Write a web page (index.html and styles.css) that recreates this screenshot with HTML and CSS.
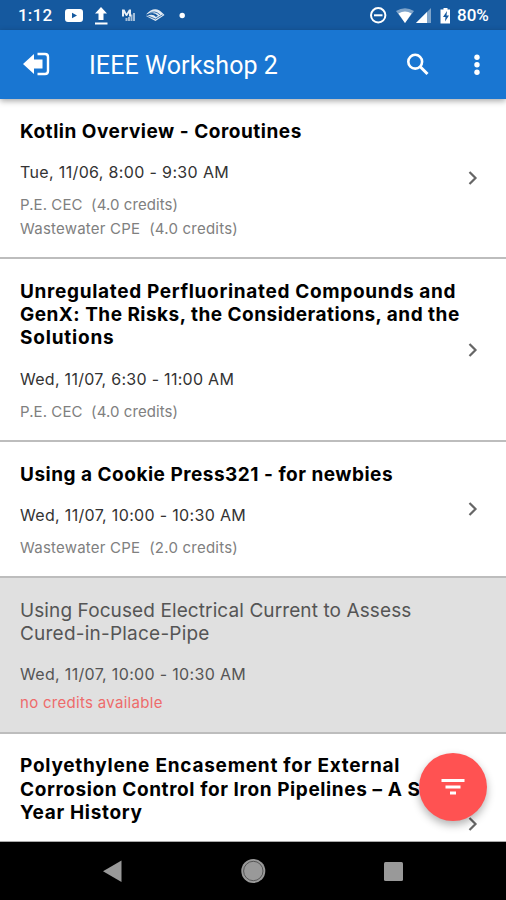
FILE: index.html
```html
<!DOCTYPE html>
<html lang="en">
<head>
<meta charset="utf-8">
<title>IEEE Workshop 2</title>
<link rel="stylesheet" href="styles.css">
</head>
<body>
<div class="screen">
  <div class="status">
    <span class="clock">1:12</span>
    <svg class="status-left" width="125" height="30" viewBox="0 0 125 30" fill="#fff">
      <path fill-rule="evenodd" d="M6 9h12q3 0 3 3v7q0 3-3 3H6q-3 0-3-3v-7q0-3 3-3zM10 12.800v5.400l5-2.700z"/>
      <path d="M39 7l-6 6.500h3.500V20h5v-6.500H45zM33 22.500h12.500v2H33z"/>
      <path d="M60 9.500h2.500l2 4 2.500-4h2v7h-2v-3.500l-2 3h-1l-2-3v3.500h-2z" opacity=".9"/><path d="M63.500 18h2v3h-2zM66 17h2v4h-2zM68.500 14.500h2V21h-2zM71 13h2v8h-2z" opacity=".6"/>
      <path d="M84 14.500q9-10 17-1l1.500 1.500-9 6-9.500-5q7-3 10 1l2-1.200q-4-5-12-1.300z" opacity=".88"/>
      <path d="M86.500 14q6-4.500 11.500.8M85 15.500l8.500 3.500 7-4.200" fill="none" stroke="#15599f" stroke-width=".8"/>
      <circle cx="120.200" cy="15.500" r="2.700"/>
    </svg>
    <svg class="status-right" width="84" height="30" viewBox="0 0 84 30" fill="#fff">
      <circle cx="8.200" cy="15.300" r="7.200" fill="none" stroke="#fff" stroke-width="2"/><path d="M4 14.300h8.500v2H4z"/>
      <path d="M26 11q9-5.500 18 0l-9 12z" opacity=".45"/><path d="M28.500 13.500q6.500-4 13 0L35 23z"/>
      <path d="M61 8v15H46z" opacity=".45"/><path d="M57 12v11H46z"/>
      <path fill-rule="evenodd" d="M73.500 8h4v1.500H80v14H70.500v-14h3zM77 11l-4 6h2.500l-.5 4.500 4-6h-2.500z"/>
    </svg>
    <span class="battery">80%</span>
  </div>
  <header class="bar">
    <svg class="exit" width="30" height="26" viewBox="0 0 30 26">
      <path d="M1 12L12 2v5.500h8.500v9H12V22z" fill="#fff"/>
      <path d="M15.500 2H23q3 0 3 3v14q0 3-3 3h-7.500" fill="none" stroke="#fff" stroke-width="2.400"/>
    </svg>
    <h1>IEEE Workshop 2</h1>
    <svg class="search" width="24" height="24" viewBox="0 0 24 24" fill="none" stroke="#fff"><circle cx="9.200" cy="8.700" r="6.900" stroke-width="2.600"/><path d="M14 13.500l7.500 7.500" stroke-width="3"/></svg>
    <svg class="more" width="8" height="24" viewBox="0 0 8 24" fill="#fff"><circle cx="4" cy="4.200" r="2.700"/><circle cx="4" cy="11.700" r="2.700"/><circle cx="4" cy="19.200" r="2.700"/></svg>
  </header>
  <main class="list">
    <article class="row">
      <div class="text">
        <h2><span class="t1">Kotlin Overview - Coroutines</span></h2>
        <p class="time"><span class="d1">Tue, 11/06, 8:00 - 9:30 AM</span></p>
        <p class="credit"><span class="pe">P.E. CEC&nbsp; (4.0 credits)</span></p>
        <p class="credit"><span class="ww">Wastewater CPE&nbsp; (4.0 credits)</span></p>
      </div>
      <svg class="chevron" width="10" height="14" viewBox="0 0 10 14"><path d="M1.500 1l6 6-6 6"/></svg>
    </article>
    <article class="row">
      <div class="text">
        <h2><span class="t2">Unregulated Perfluorinated Compounds and</span><br><span class="t3">GenX: The Risks, the Considerations, and the</span><br><span class="t4">Solutions</span></h2>
        <p class="time"><span class="d2">Wed, 11/07, 6:30 - 11:00 AM</span></p>
        <p class="credit"><span class="pe">P.E. CEC&nbsp; (4.0 credits)</span></p>
      </div>
      <svg class="chevron" width="10" height="14" viewBox="0 0 10 14"><path d="M1.500 1l6 6-6 6"/></svg>
    </article>
    <article class="row">
      <div class="text">
        <h2><span class="t5">Using a Cookie Press321 - for newbies</span></h2>
        <p class="time"><span class="d3">Wed, 11/07, 10:00 - 10:30 AM</span></p>
        <p class="credit"><span class="ww">Wastewater CPE&nbsp; (2.0 credits)</span></p>
      </div>
      <svg class="chevron" width="10" height="14" viewBox="0 0 10 14"><path d="M1.500 1l6 6-6 6"/></svg>
    </article>
    <article class="row disabled">
      <div class="text">
        <h2><span class="t6">Using Focused Electrical Current to Assess</span><br><span class="t7">Cured-in-Place-Pipe</span></h2>
        <p class="time"><span class="d3">Wed, 11/07, 10:00 - 10:30 AM</span></p>
        <p class="credit none"><span class="na">no credits available</span></p>
      </div>
    </article>
    <article class="row last">
      <div class="text">
        <h2><span class="t8">Polyethylene Encasement for External</span><br><span class="t9">Corrosion Control for Iron Pipelines – A S</span><br><span class="t10">Year History</span></h2>
      </div>
      <svg class="chevron" width="10" height="14" viewBox="0 0 10 14"><path d="M1.500 1l6 6-6 6"/></svg>
    </article>
  </main>
  <button class="fab" aria-label="Filter"><svg width="24" height="18" viewBox="0 0 24 18" fill="#fff"><path d="M.5 1h23v3H.5zM4.500 7.500h15v3h-15zM9 13.500h6v3H9z"/></svg></button>
  <nav class="nav">
    <svg width="506" height="58" viewBox="0 0 506 58" fill="#999"><path d="M103 29.300L121.500 18.500v21.500z"/><circle cx="253.300" cy="29" r="12"/><circle cx="253.300" cy="29" r="9.700" fill="none" stroke="#444" stroke-width=".8"/><rect x="384" y="20" width="19" height="19" rx="1.500"/></svg>
  </nav>
</div>
</body>
</html>
```

FILE: styles.css
```css
* { box-sizing: border-box; }
body { margin: 0; font-family: Roboto, "Liberation Sans", sans-serif; background: #fff; }
.screen { position: relative; width: 506px; height: 900px; display: flex; flex-direction: column; overflow: hidden; }
.status { flex: none; height: 30px; background: #15599f; display: flex; align-items: center; color: #fff; font-size: 17px; font-weight: 500; }
.clock { width: 62px; padding-left: 18px; letter-spacing: .2px; }
.status-right { margin-left: 183px; }
.battery { margin-left: 3px; font-size: 17px; }
.bar { flex: none; height: 69px; background: #1976d2; display: flex; align-items: center; position: relative; z-index: 1; box-shadow: 0 2px 6px rgba(0,0,0,.35); }
.exit { margin-left: 22px; }
h1 { margin: 2px 0 0 37px; width: 317px; font-size: 25px; line-height: 32px; font-weight: 400; color: #fff; letter-spacing: .06px; white-space: nowrap; }
.more { margin-left: 43px; }
.list { flex: 1; min-height: 0; overflow: hidden; background: #fff; border-bottom: 1px solid #aaa; font-family: Inter, Roboto, sans-serif; }
.row { display: flex; align-items: center; justify-content: space-between; padding: 20.500px 28px 16.200px 20px; border-bottom: 2px solid #bdbdbd; }
.text { white-space: nowrap; }
h2 { margin: 0; font-size: 19px; line-height: 23.400px; font-weight: 700; color: #000; }
p { margin: 0; }
.time { margin-top: 19px; font-size: 16px; line-height: 20px; color: #333; }
.credit { font-size: 15px; line-height: 24px; color: #808080; }
.time + .credit { margin-top: 11px; }
.chevron { flex: none; margin-bottom: 4px; fill: none; stroke: #666; stroke-width: 2.200; }
.disabled { background: #e0e0e0; }
.disabled h2 { font-weight: 400; color: #555; }
.disabled .time { color: #555; }
.time + .none { margin-top: 7px; color: #ee6b6b; }
.last { height: 184px; align-items: flex-start; }
.last .chevron { margin-top: 63px; }
.t1 { letter-spacing: .52px; }
.t2 { letter-spacing: .67px; }
.t3 { letter-spacing: .48px; }
.t4 { letter-spacing: .8px; }
.t5 { letter-spacing: .5px; }
.t6 { letter-spacing: .1px; }
.t7 { letter-spacing: .22px; }
.t8 { letter-spacing: .75px; }
.t9 { letter-spacing: .6px; }
.t10 { letter-spacing: .68px; }
.d1 { letter-spacing: .35px; }
.d2 { letter-spacing: .28px; }
.d3 { letter-spacing: .33px; }
.pe { letter-spacing: .08px; }
.ww { letter-spacing: .22px; }
.na { letter-spacing: .3px; }
.fab { position: absolute; left: 419px; top: 753px; width: 68px; height: 68px; border: 0; border-radius: 50%; background: #ff5252; display: flex; align-items: center; justify-content: center; padding: 0; z-index: 2; box-shadow: 0 4px 8px rgba(0,0,0,.3); }
.nav { flex: none; height: 58px; background: #000; }
.nav svg { display: block; }
```
